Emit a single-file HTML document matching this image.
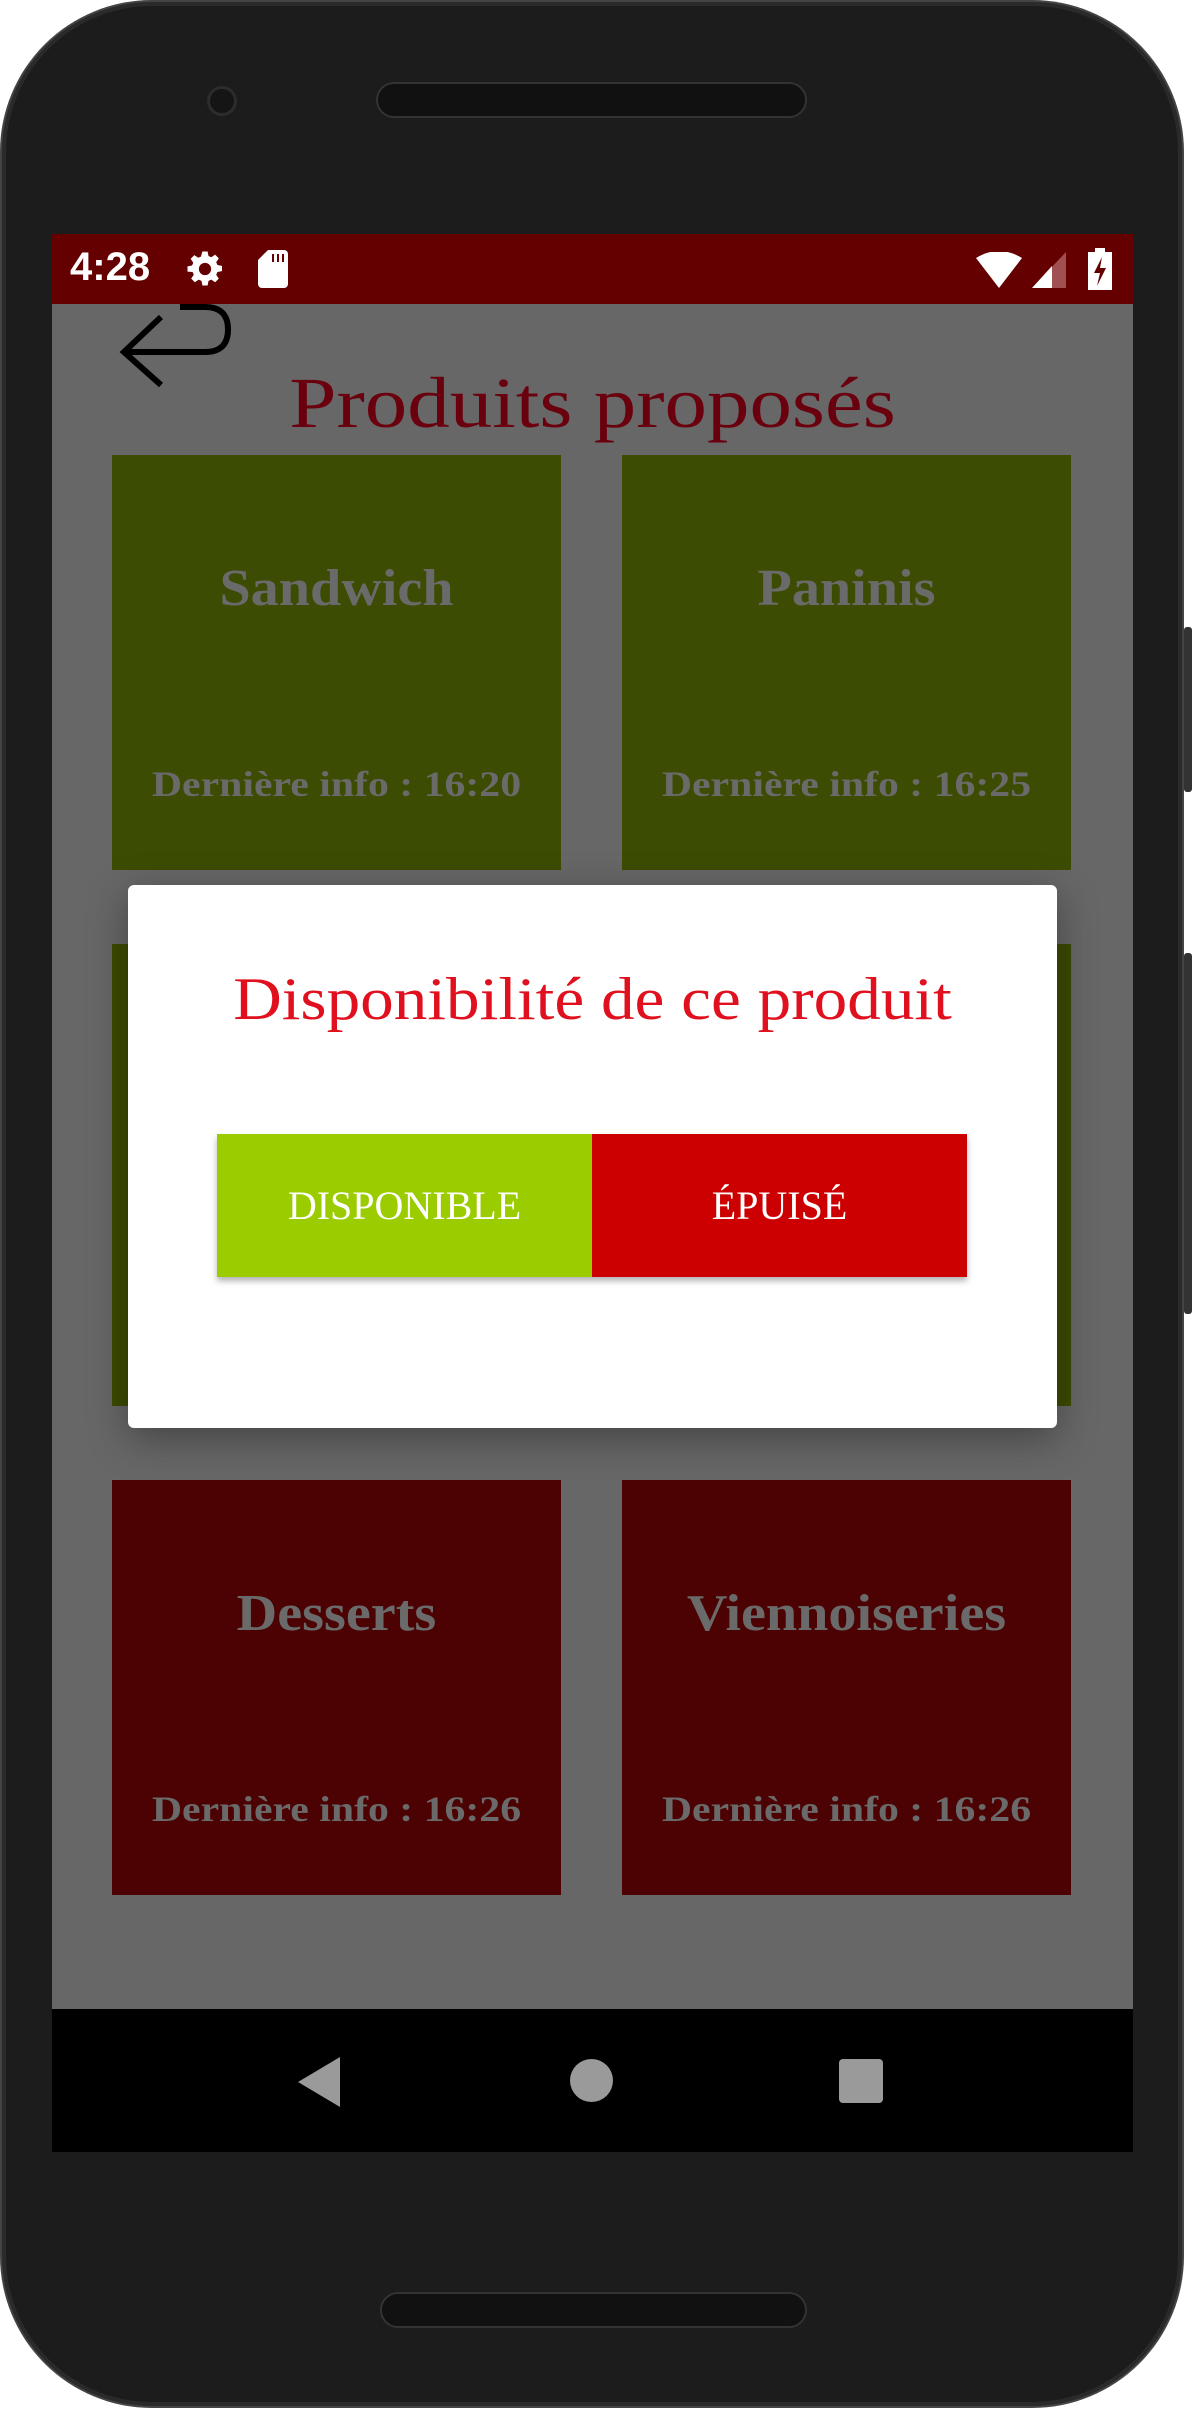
<!DOCTYPE html>
<html><head><meta charset="utf-8"><style>
*{margin:0;padding:0;box-sizing:border-box}
body{width:1194px;height:2409px;background:#fff;position:relative;overflow:hidden;font-family:"Liberation Serif",serif}
.phone{position:absolute;left:2px;top:2px;width:1180px;height:2404px;background:#1c1c1d;border-radius:150px;border:4px solid #2a2a2a;box-shadow:0 0 0 2px #444}
.abs{position:absolute}
.screen{position:absolute;left:52px;top:234px;width:1081px;height:1918px;background:#676767;overflow:hidden}
.sb{position:absolute;left:0;top:0;width:1081px;height:70px;background:#640000;color:#fff;font-family:"Liberation Sans",sans-serif}
.card{position:absolute;width:449px;text-align:center;color:#6a6a6a;font-weight:bold}
.card .n{position:absolute;left:0;right:0;font-size:52px;transform:scaleX(1.08)}
.card .d{position:absolute;left:0;right:0;font-size:36px;transform:scaleX(1.16)}
.g{background:#3c4c02}.r{background:#4c0202}
</style></head><body>
<div class="phone"></div>
<div class="abs" style="left:376px;top:82px;width:431px;height:36px;border-radius:18px;background:#111;border:2px solid #333"></div>
<div class="abs" style="left:207px;top:86px;width:30px;height:30px;border-radius:50%;background:#151515;border:3px solid #2c2c2c"></div>
<div class="abs" style="left:380px;top:2292px;width:427px;height:36px;border-radius:18px;background:#111;border:2px solid #333"></div>
<div class="abs" style="left:1184px;top:627px;width:8px;height:165px;background:#333;border-radius:3px"></div>
<div class="abs" style="left:1184px;top:953px;width:8px;height:361px;background:#333;border-radius:3px"></div>
<div class="screen">
 <div class="sb">
  <div class="abs" style="left:18px;top:11px;font-size:40px;font-weight:bold">4:28</div>
  <svg class="abs" style="left:132px;top:14px" width="42" height="42" viewBox="0 0 24 24"><path fill="#fff" fill-rule="evenodd" d="M10.5 2h3l.5 2.6 1.6.7 2.2-1.5 2.1 2.1-1.5 2.2.7 1.6 2.6.5v3l-2.6.5-.7 1.6 1.5 2.2-2.1 2.1-2.2-1.5-1.6.7-.5 2.6h-3l-.5-2.6-1.6-.7-2.2 1.5-2.1-2.1 1.5-2.2-.7-1.6L2 13.5v-3l2.6-.5.7-1.6-1.5-2.2 2.1-2.1 2.2 1.5 1.6-.7zM12 8.5a3.5 3.5 0 100 7 3.5 3.5 0 000-7z"/></svg>
  <svg class="abs" style="left:206px;top:16px" width="30" height="38" viewBox="0 0 15 19"><path fill="#fff" d="M5 0h8a2 2 0 012 2v15a2 2 0 01-2 2H2a2 2 0 01-2-2V5z"/><path fill="#640000" d="M7 2h1v4H7zM9.5 2h1v4h-1zM12 2h1v4h-1z"/></svg>
  <svg class="abs" style="left:924px;top:18px" width="46" height="36" viewBox="0 0 46 36"><path fill="#fff" d="M0 6Q23-8 46 6L23 36z"/></svg>
  <svg class="abs" style="left:980px;top:18px" width="34" height="36" viewBox="0 0 34 36"><path fill="#a05050" d="M34 0V36H0z"/><path fill="#fff" d="M20 14V36H0z"/></svg>
  <svg class="abs" style="left:1036px;top:14px" width="24" height="42" viewBox="0 0 24 42"><rect x="7" y="0" width="10" height="5" fill="#fff"/><rect x="0" y="4" width="24" height="38" fill="#fff"/><path fill="#640000" d="M14 9L6 25h6l-3 13 9-18h-6z"/></svg>
 </div>
 <svg class="abs" style="left:0;top:0" width="200" height="170" viewBox="0 0 200 170"><path d="M109 83L72 118l37 33M72 118h81q23 0 23-22.5T153 73h-25" fill="none" stroke="#000" stroke-width="6"/></svg>
 <div class="abs" style="left:0;width:1081px;top:128px;text-align:center;font-size:72px;color:#6a000e;transform:scaleX(1.18)">Produits proposés</div>
 <div class="card g" style="left:60px;top:221px;height:415px"><div class="n" style="top:104px">Sandwich</div><div class="d" style="top:308px">Dernière info : 16:20</div></div>
 <div class="card g" style="left:570px;top:221px;height:415px"><div class="n" style="top:104px">Paninis</div><div class="d" style="top:308px">Dernière info : 16:25</div></div>
 <div class="card g" style="left:60px;top:710px;height:462px"></div>
 <div class="card g" style="left:570px;top:710px;height:462px"></div>
 <div class="card r" style="left:60px;top:1246px;height:415px"><div class="n" style="top:104px">Desserts</div><div class="d" style="top:308px">Dernière info : 16:26</div></div>
 <div class="card r" style="left:570px;top:1246px;height:415px"><div class="n" style="top:104px">Viennoiseries</div><div class="d" style="top:308px">Dernière info : 16:26</div></div>
 <div class="abs" style="left:76px;top:651px;width:929px;height:543px;background:#fff;border-radius:6px;box-shadow:0 10px 40px rgba(0,0,0,.35)">
  <div class="abs" style="left:0;right:0;top:80px;text-align:center;font-size:60px;color:#e0101f;transform:scaleX(1.12)">Disponibilité de ce produit</div>
  <div class="abs" style="left:89px;top:249px;width:750px;height:143px;box-shadow:0 4px 6px rgba(0,0,0,.3);display:flex;color:#fff;font-size:40px">
   <div style="width:375px;background:#9acc00;display:flex;align-items:center;justify-content:center">DISPONIBLE</div>
   <div style="width:375px;background:#cc0000;display:flex;align-items:center;justify-content:center">ÉPUISÉ</div>
  </div>
 </div>
 <div class="abs" style="left:0;top:1775px;width:1081px;height:143px;background:#000">
  <svg class="abs" style="left:246px;top:48px" width="44" height="50" viewBox="0 0 44 50"><path fill="#9a9a9a" d="M42 0V50L0 25z"/></svg>
  <div class="abs" style="left:518px;top:50px;width:43px;height:43px;border-radius:50%;background:#9a9a9a"></div>
  <div class="abs" style="left:787px;top:50px;width:44px;height:44px;border-radius:4px;background:#9a9a9a"></div>
 </div>
</div>
</body></html>
